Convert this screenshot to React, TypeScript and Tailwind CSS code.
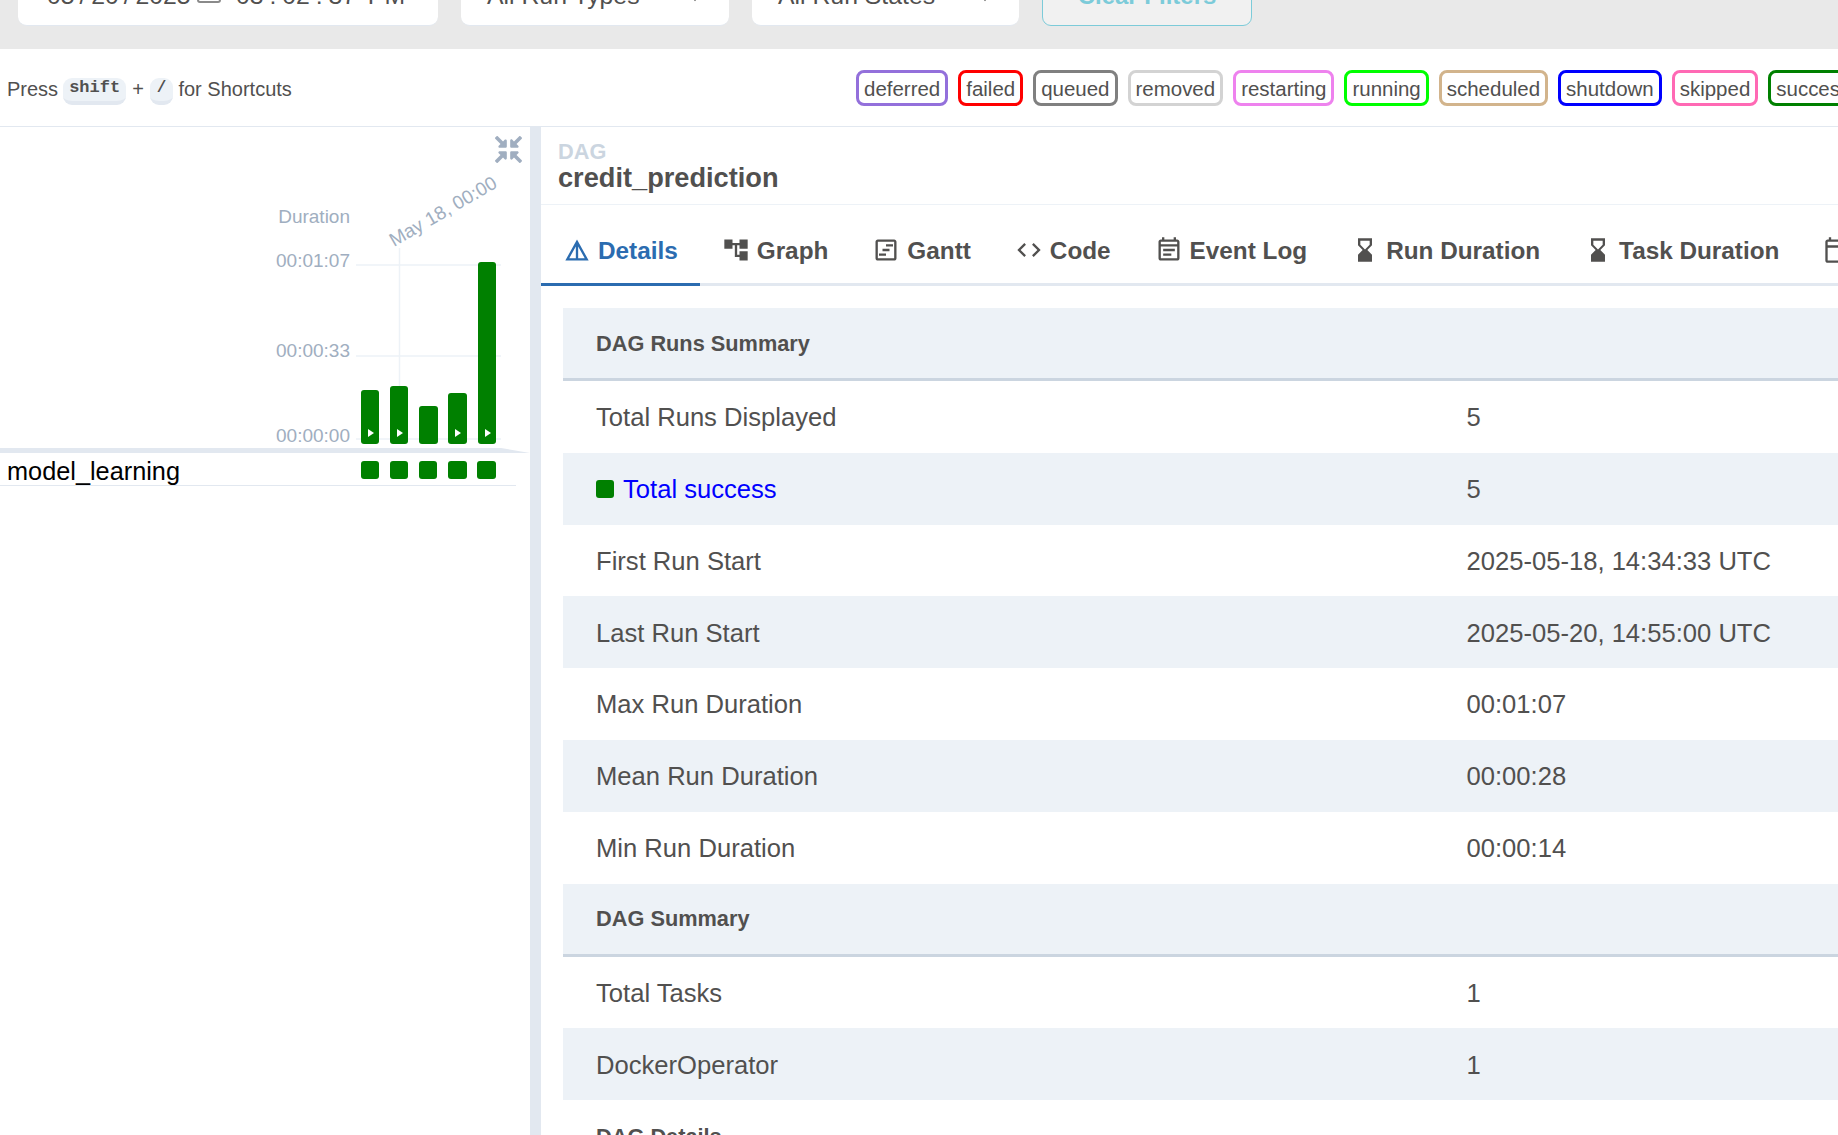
import { FaCompressArrowsAlt } from "react-icons/fa";
import {
  MdDetails,
  MdAccountTree,
  MdOutlineViewTimeline,
  MdCode,
  MdOutlineEventNote,
  MdHourglassBottom,
  MdOutlineCalendarToday,
} from "react-icons/md";

const states = [
  { name: "deferred", border: "border-[#9370db]" },
  { name: "failed", border: "border-[#ff0000]" },
  { name: "queued", border: "border-[#808080]" },
  { name: "removed", border: "border-[#d3d3d3]" },
  { name: "restarting", border: "border-[#ee82ee]" },
  { name: "running", border: "border-[#00ff00]" },
  { name: "scheduled", border: "border-[#d2b48c]" },
  { name: "shutdown", border: "border-[#0000ff]" },
  { name: "skipped", border: "border-[#ff69b4]" },
  { name: "success", border: "border-[#008000]" },
];

const tabs = [
  { name: "Details", icon: MdDetails },
  { name: "Graph", icon: MdAccountTree },
  { name: "Gantt", icon: MdOutlineViewTimeline },
  { name: "Code", icon: MdCode },
  { name: "Event Log", icon: MdOutlineEventNote },
  { name: "Run Duration", icon: MdHourglassBottom },
  { name: "Task Duration", icon: MdHourglassBottom },
  { name: "Calendar", icon: MdOutlineCalendarToday },
];

const bars = [
  { x: 361, w: 18, top: 263, play: true },
  { x: 390, w: 18, top: 259, play: true },
  { x: 419, w: 19, top: 279, play: false },
  { x: 448, w: 19, top: 266, play: true },
  { x: 478, w: 18, top: 135, play: true },
];

const squares = [
  "w-[18px] ml-[361px]",
  "w-[18px] ml-[11px]",
  "w-[18px] ml-[11px]",
  "w-[19px] ml-[11px]",
  "w-[19px] ml-[10px]",
];

const runRows = [
  { label: "Total Runs Displayed", value: "5" },
  { label: "Total success", value: "5", link: true },
  { label: "First Run Start", value: "2025-05-18, 14:34:33 UTC" },
  { label: "Last Run Start", value: "2025-05-20, 14:55:00 UTC" },
  { label: "Max Run Duration", value: "00:01:07" },
  { label: "Mean Run Duration", value: "00:00:28" },
  { label: "Min Run Duration", value: "00:00:14" },
];

const dagRows = [
  { label: "Total Tasks", value: "1" },
  { label: "DockerOperator", value: "1" },
];

function SelectArrow() {
  return (
    <svg width="16" height="24" viewBox="0 0 16 24" className="ml-auto mr-[26px] shrink-0">
      <path d="M2 14 L8 22 L14 14" fill="none" stroke="#51504f" strokeWidth="1.5" />
    </svg>
  );
}

function FilterBar() {
  return (
    <div className="h-[49px] bg-[#e9e9e9] overflow-hidden flex items-end pl-[18px] pb-[23px] gap-[23px] shrink-0">
      <div className="w-[420px] h-[60px] shrink-0 bg-white rounded-[9px] border-b border-[#e2e8f0] flex items-start pl-[29px] pt-[12px] text-[24.8px] leading-[36px]">
        <span className="w-[150px] whitespace-pre [word-spacing:-2px]">05 / 20 / 2025</span>
        <span className="w-[24px] h-[20px] mt-[-12px] border-2 border-[#8a8a8a] rounded-[3px] shrink-0 translate-y-[17px]"></span>
        <span className="ml-[15px] whitespace-pre [word-spacing:-1px]">03 : 02 : 37  PM</span>
      </div>
      <div className="w-[268px] h-[60px] shrink-0 bg-white rounded-[9px] border-b border-[#e2e8f0] flex items-start pl-[26px] pt-[12px] text-[24.8px] leading-[36px]">
        <span>All Run Types</span>
        <SelectArrow />
      </div>
      <div className="w-[267px] h-[60px] shrink-0 bg-white rounded-[9px] border-b border-[#e2e8f0] flex items-start pl-[26px] pt-[12px] text-[24.8px] leading-[36px]">
        <span>All Run States</span>
        <SelectArrow />
      </div>
      <div className="w-[210px] h-[60px] shrink-0 bg-[#f1f1f1] rounded-[9px] border border-[#7ccbd9] flex justify-center pt-[11px] text-[24px] leading-[36px] font-bold text-[#7ccbd9]">Clear Filters</div>
    </div>
  );
}

function LegendBar() {
  return (
    <div className="h-[78px] shrink-0 border-b border-[#e2e8f0] flex items-center overflow-hidden">
      <div className="w-[856px] shrink-0 pl-[7px] pt-[2px] flex items-center text-[20px]">
        <span>Press</span>
        <kbd className="ml-[5px] mt-[6px] h-[27px] px-[6px] bg-[#edf2f7] border-b-[4px] border-[#e2e8f0] rounded-[9px] text-[17px] leading-[20px] font-bold font-['Liberation_Mono',monospace]">shift</kbd>
        <span className="mx-[6px]">+</span>
        <kbd className="mt-[6px] h-[27px] px-[7px] bg-[#edf2f7] border-b-[4px] border-[#e2e8f0] rounded-[9px] text-[16px] leading-[20px] font-bold font-['Liberation_Mono',monospace]">/</kbd>
        <span className="ml-[5px]">for Shortcuts</span>
      </div>
      <div className="flex gap-[10px] shrink-0">
        {states.map((s) => (
          <span key={s.name} className={`h-[36px] px-[5px] border-[3px] rounded-[8px] text-[20.48px] leading-[31px] ${s.border}`}>
            {s.name}
          </span>
        ))}
      </div>
    </div>
  );
}

function DurationChart() {
  return (
    <svg width="530" height="326" className="block shrink-0">
      <line x1="356" x2="501" y1="138" y2="138" stroke="#edf2f7" strokeWidth="1.5" />
      <line x1="356" x2="501" y1="229" y2="229" stroke="#edf2f7" strokeWidth="1.5" />
      <line x1="356" x2="501" y1="312" y2="312" stroke="#edf2f7" strokeWidth="1.5" />
      <line x1="399.5" x2="399.5" y1="121" y2="312" stroke="#edf2f7" strokeWidth="1.5" />
      <g fill="#a0aec0" fontSize="19" textAnchor="end">
        <text x="350" y="96">Duration</text>
        <text x="350" y="140">00:01:07</text>
        <text x="350" y="230">00:00:33</text>
        <text x="350" y="315">00:00:00</text>
      </g>
      <text x="394" y="120" fill="#a0aec0" fontSize="19" transform="rotate(-30 394 120)">May 18, 00:00</text>
      {bars.map((b) => (
        <g key={b.x}>
          <rect x={b.x} y={b.top} width={b.w} height={317 - b.top} rx="3" fill="#008000" />
          {b.play && <path d={`M${b.x + 7} 302 l0 8 l6 -4 z`} fill="#ffffff" />}
        </g>
      ))}
      <path d="M0 321 L501 321 L530 326 L0 326 Z" fill="#e2e8f0" />
    </svg>
  );
}

function LeftPanel() {
  return (
    <div className="w-[530px] shrink-0 relative">
      <FaCompressArrowsAlt className="absolute left-[495px] top-[9px] text-[27px] text-[#a0aec0]" />
      <DurationChart />
      <div className="h-[33px] w-[516px] border-b border-[#e2e8f0] relative flex items-center">
        <span className="absolute left-[7px] top-[0px] text-[25.3px] leading-[36px] text-black">model_learning</span>
        <div className="flex items-center mt-[1px]">
          {squares.map((cls) => (
            <div key={cls} className={`${cls} h-[18px] bg-[#008000] rounded-[3px]`}></div>
          ))}
        </div>
      </div>
    </div>
  );
}

function SummaryHeader({ title }: { title: string }) {
  return (
    <div className="h-[73px] bg-[#edf2f7] border-b-[3px] border-[#cbd5e0] pl-[33px] pt-[2px] flex items-center text-[21.76px] font-bold">
      {title}
    </div>
  );
}

function SummaryRow({ label, value, link, striped }: { label: string; value: string; link?: boolean; striped: boolean }) {
  return (
    <div className={`h-[71.8px] flex items-center text-[25.6px] pl-[33px] pt-[1px] ${striped ? "bg-[#edf2f7]" : "bg-white"}`}>
      <div className="w-[870.5px] shrink-0 flex items-center">
        {link && <span className="w-[18px] h-[18px] bg-[#008000] rounded-[3px] mr-[9px]"></span>}
        <span className={link ? "text-[#0000ff]" : ""}>{label}</span>
      </div>
      <div>{value}</div>
    </div>
  );
}

function RightPanel() {
  return (
    <div className="flex-1 min-w-0 border-l-[11px] border-[#e2e8f0] flex flex-col overflow-hidden">
      <div className="h-[78px] shrink-0 border-b border-[#edf2f7] pl-[17px] pt-[14px]">
        <div className="text-[21.76px] leading-[21px] font-bold text-[#cbd5e0]">DAG</div>
        <div className="text-[27.2px] leading-[32px] font-bold">credit_prediction</div>
      </div>
      <div className="flex h-[81px] shrink-0">
        {tabs.map((t, i) => (
          <div
            key={t.name}
            className={`h-[81px] px-[22px] pt-[14px] shrink-0 flex items-center gap-[7px] text-[24.32px] font-bold border-b-[3.5px] ${i === 0 ? "border-[#2b6cb0] text-[#2b6cb0]" : "border-[#e2e8f0]"}`}
          >
            <t.icon className="text-[28px] shrink-0 mt-[-2px]" />
            <span>{t.name}</span>
          </div>
        ))}
      </div>
      <div className="ml-[22px] mt-[22px] w-[1400px]">
        <SummaryHeader title="DAG Runs Summary" />
        {runRows.map((r, i) => (
          <SummaryRow key={r.label} label={r.label} value={r.value} link={r.link} striped={i % 2 === 1} />
        ))}
        <SummaryHeader title="DAG Summary" />
        {dagRows.map((r, i) => (
          <SummaryRow key={r.label} label={r.label} value={r.value} striped={i % 2 === 1} />
        ))}
        <div className="h-[74px] pl-[33px] flex items-center text-[21.76px] font-bold">DAG Details</div>
      </div>
    </div>
  );
}

export default function App() {
  return (
    <div className="w-[1838px] h-[1135px] overflow-hidden bg-white flex flex-col font-['Liberation_Sans',Arial,sans-serif] text-[#51504f]">
      <FilterBar />
      <LegendBar />
      <div className="flex flex-1 min-h-0">
        <LeftPanel />
        <RightPanel />
      </div>
    </div>
  );
}
